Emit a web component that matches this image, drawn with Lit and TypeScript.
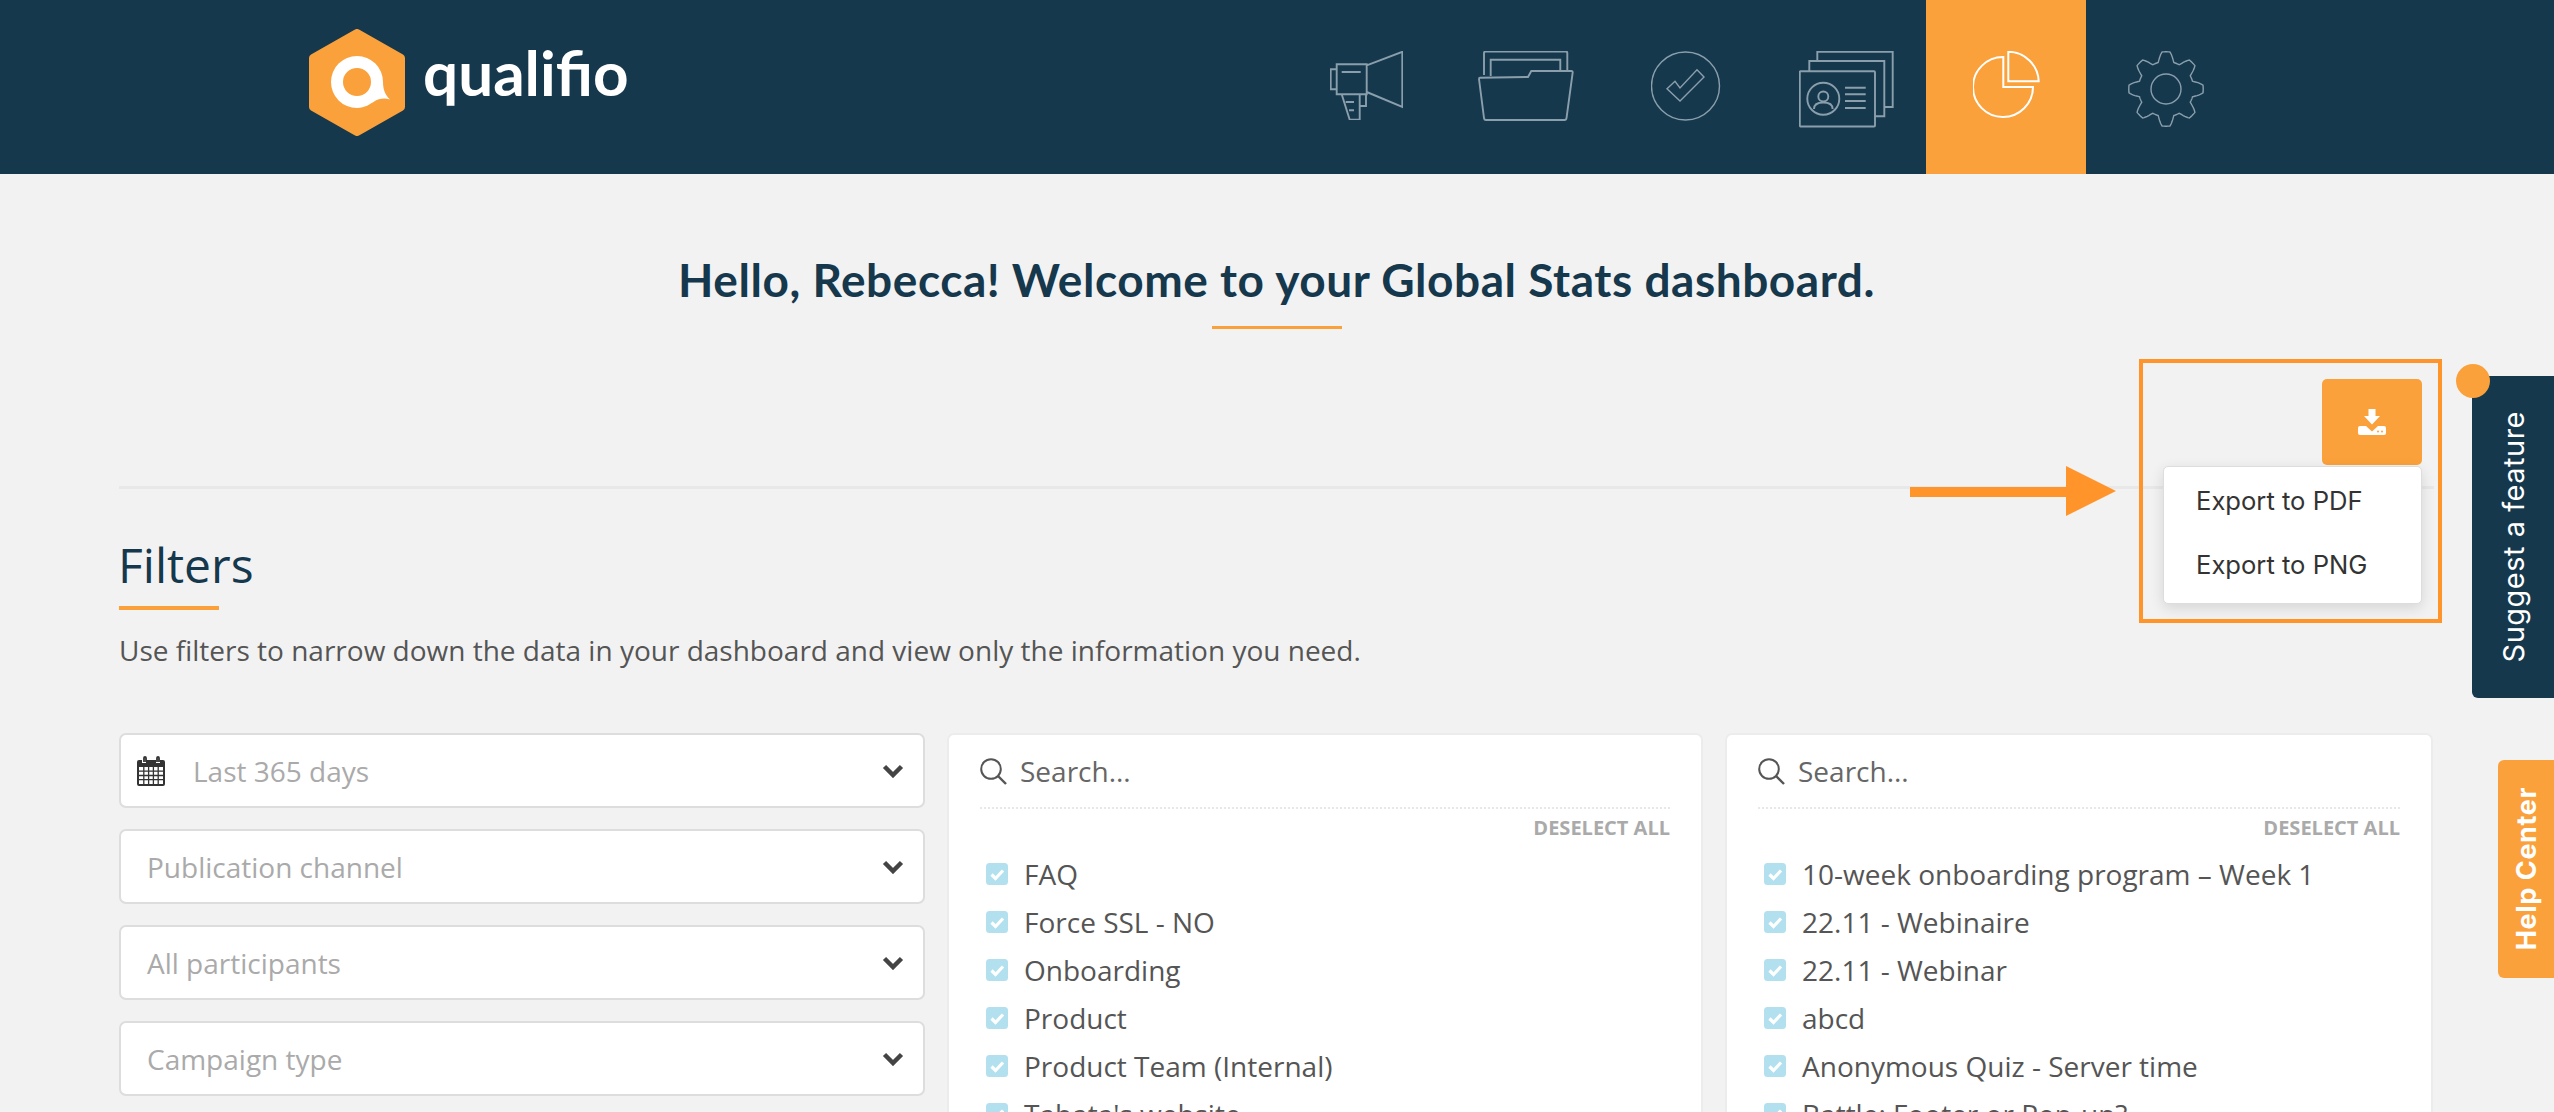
import { LitElement, html, css, svg } from "lit";
import { customElement } from "lit/decorators.js";

const gearPath = (() => {
  const pts: string[] = [];
  const n = 240;
  for (let i = 0; i < n; i++) {
    const t = (i / n) * Math.PI * 2;
    const c = Math.max(-1, Math.min(1, 1.5 * Math.cos(8 * t)));
    const r = 32.4 + 4.8 * c;
    pts.push(`${(38 + r * Math.sin(t)).toFixed(2)},${(38 - r * Math.cos(t)).toFixed(2)}`);
  }
  return "M" + pts.join("L") + "Z";
})();

const megaphone = svg`<svg class="ico" width="73" height="69" viewBox="0 0 73 69"><path d="M36.7 14.3 72.3.8V56L36.7 41M6.7 13.3h30v30h-30zM6.7 18.3h-6v20h6M11.7 21h19M11.7 43.3l8 25.4h10V43.3M15.7 51H24M19 59.3h5M29.7 55H36V43.3"/></svg>`;
const folder = svg`<svg class="ico" width="96" height="70" viewBox="0 0 96 70"><path d="M6 24V2q0-1.500 1.500-1.500h80.300q1.500 0 1.500 1.500v17M12.700 25V8.700h69.600v10.600M2 26.700 50 26l3.300-6h40q1.500 0 1.400 1.500L88.500 67q-.2 2-2 2H8q-1.800 0-2-2L1 28q0-1.300 1-1.300Z"/></svg>`;
const check = svg`<svg class="ico thin" width="70" height="70" viewBox="0 0 70 70"><circle cx="34.500" cy="35" r="34"/><path d="M16 37.700 24 30.300 29 37 46 18.700 53 26 29 50Z"/></svg>`;
const cards = svg`<svg class="ico" width="95" height="77" viewBox="0 0 95 77"><rect x=".8" y="20.300" width="75.200" height="55.200" rx="1"/><path d="M10.300 20V10h75v55.300H76M18.300 9.500V.8h75.400V56h-8.400"/><circle cx="24.300" cy="47.700" r="16"/><circle cx="24.300" cy="45.500" r="5"/><path d="M15 58c0-5 4-6.500 9.300-6.500s9.300 1.500 9.300 6.500M46 36.700h20.700M46 43.300h20.700M46 50h20.700M46 57h20.700"/></svg>`;
const pie = svg`<svg class="ico active" width="67" height="67" viewBox="0 0 67 67"><path d="M30.300 6V36H60A30 30 0 1 1 30.300 6ZM35.300.8V30.300H65.700A30.500 30.500 0 0 0 35.300.8Z"/></svg>`;
const gear = svg`<svg class="ico thin" width="76" height="76" viewBox="0 0 76 76"><path d=${gearPath}/><circle cx="38" cy="38" r="15"/></svg>`;
const tabs = [megaphone, folder, check, cards, pie, gear];

const calendar = svg`<svg class="cal" width="28" height="30" viewBox="0 0 28 30"><path fill="#333" d="M2 4h3v3h4V4h10v3h4V4h3q2 0 2 2v22q0 2-2 2H2q-2 0-2-2V6q0-2 2-2Z"/><rect x="2" y="11" width="24" height="17" fill="#fff"/><path fill="none" stroke="#333" stroke-width="1.300" d="M2 15.200h24M2 19.500h24M2 23.700h24M6.800 11v17M11.600 11v17M16.400 11v17M21.200 11v17"/><path fill="none" stroke="#333" stroke-width="1.800" d="M7 6V2q0-1 1-1t1 1v4M20 6V2q0-1 1-1t1 1v4"/></svg>`;
const chevron = svg`<svg class="chev" width="22" height="14" viewBox="0 0 22 14"><path d="M2.500 2.500 11 11l8.500-8.500" fill="none" stroke="#444" stroke-width="4.500"/></svg>`;
const search = svg`<svg class="search" width="27" height="27" viewBox="0 0 27 27"><circle cx="11" cy="11" r="9.800" fill="none" stroke="#555" stroke-width="2"/><path d="M18 18l8 8" stroke="#555" stroke-width="2.400"/></svg>`;
const tick = svg`<svg class="tick" width="22" height="22" viewBox="0 0 22 22"><rect width="22" height="22" rx="3.500" fill="#b3e0ee"/><path d="M5.500 11.500 9.500 15.500 17 7.500" fill="none" stroke="#fff" stroke-width="3.200"/></svg>`;
const download = svg`<svg width="28" height="26" viewBox="0 0 28 26"><path fill="#fff" d="M10.500 0h7v7h4.500L14 15.500 6 7h4.500Z"/><path fill="#fff" d="M0 19q0-2 2-2h6l6 5.500 6-5.500h6q2 0 2 2v5q0 2-2 2H2q-2 0-2-2Z"/><circle cx="20" cy="22.500" r="1" fill="#fba13b"/><circle cx="24" cy="22.500" r="1" fill="#fba13b"/></svg>`;

const selects = ["Publication channel", "All participants", "Campaign type"];
const col2 = ["FAQ", "Force SSL - NO", "Onboarding", "Product", "Product Team (Internal)", "Tabata's website"];
const col3 = ["10-week onboarding program – Week 1", "22.11 - Webinaire", "22.11 - Webinar", "abcd", "Anonymous Quiz - Server time", "Battle: Footer or Pop-up?"];

@customElement("app-root")
export class AppRoot extends LitElement {
  static styles = css`
    :host { display: block; position: relative; width: 2554px; height: 1112px; overflow: hidden; background: #f2f2f2; font-family: "Open Sans", sans-serif; color: #555; }
    header { height: 174px; background: #16384d; display: flex; align-items: stretch; justify-content: space-between; padding: 0 308px 0 309px; }
    .logo { display: flex; align-items: flex-start; gap: 18px; padding-top: 29px; }
    .word { font-family: "Lato", sans-serif; font-weight: 700; font-size: 62px; line-height: 1; color: #fff; margin-top: 12px; }
    nav { display: flex; }
    .tab { width: 160px; display: flex; justify-content: center; padding-top: 51px; box-sizing: border-box; }
    .tab.on { background: #fba13b; }
    .ico { display: block; fill: none; stroke: #8a9fab; stroke-width: 1.900; }
    .ico.thin { stroke-width: 1.400; }
    .ico.active { stroke: #fff; stroke-width: 2; }
    main { padding: 0 120px 0 119px; }
    h1 { margin: 0; padding-top: 80px; text-align: center; font-family: "Lato", sans-serif; font-weight: 700; font-size: 46px; letter-spacing: .55px; line-height: 52px; color: #16384d; }
    .rule { width: 130px; height: 3px; background: #fba13b; margin: 20px auto 0; }
    .tools { position: relative; display: flex; justify-content: flex-end; padding-right: 12px; margin-top: 50px; }
    .dl { width: 100px; height: 86px; border-radius: 5px; background: #fba13b; display: flex; align-items: center; justify-content: center; }
    .menu { position: absolute; top: 87px; right: 12px; width: 259px; height: 138px; box-sizing: border-box; background: #fff; border: 1px solid #ddd; border-radius: 5px; box-shadow: 0 4px 14px rgba(0,0,0,.12); padding-top: 2px; z-index: 3; }
    .menu div { height: 64px; line-height: 64px; padding-left: 32px; font-family: "Inter", sans-serif; font-size: 25.600px; color: #333; }
    .divider { height: 3px; background: #e8e8e8; margin-top: 21px; }
    h2 { margin: 43px 0 0 -1px; font-weight: 400; font-size: 48px; line-height: 66px; color: #16384d; }
    .h2rule { width: 100px; height: 4px; background: #fba13b; margin-top: 8px; }
    .desc { margin: 22px 0 0; font-size: 28px; line-height: 36px; color: #555; }
    .grid { display: grid; grid-template-columns: 806px 756px 708px; column-gap: 22px; margin-top: 65px; align-items: start; }
    .stack { display: flex; flex-direction: column; gap: 21px; }
    .sel { height: 75px; box-sizing: border-box; border: 2px solid #ddd; border-radius: 7px; background: #fff; display: flex; align-items: center; padding: 0 19px 0 26px; font-size: 28px; color: #aaa; }
    .sel.date { padding-left: 16px; gap: 28px; }
    .sel span { flex: 1; }
    .chev { display: block; }
    .panel { height: 500px; box-sizing: border-box; background: #fff; border: 2px solid #ececec; border-radius: 7px; padding: 0 31px; }
    .sbar { height: 72px; display: flex; align-items: center; gap: 13px; border-bottom: 2px dotted #e8e8e8; font-size: 28px; color: #666; }
    .desel { text-align: right; font-weight: 700; font-size: 20px; line-height: 26px; color: #aaa; margin-top: 6px; }
    ul { list-style: none; margin: 9px 0 0; padding: 0; }
    li { height: 48px; display: flex; align-items: center; gap: 16px; padding-left: 6px; font-size: 28px; color: #555; }
    .tick { display: block; flex: none; }
    .annot { position: absolute; left: 2139px; top: 359px; width: 303px; height: 264px; box-sizing: border-box; border: 4px solid #ff952a; pointer-events: none; }
    .arrow { position: absolute; left: 1910px; top: 466px; }
    .side { position: absolute; right: 0; box-sizing: border-box; display: flex; align-items: center; justify-content: center; border-radius: 6px 0 0 6px; color: #fff; font-family: "Inter", sans-serif; }
    .side span { writing-mode: vertical-rl; transform: rotate(180deg); white-space: nowrap; }
    .suggest { top: 376px; width: 82px; height: 322px; background: #16384d; font-size: 29px; letter-spacing: .5px; }
    .help { top: 760px; width: 56px; height: 218px; background: #fba13b; font-size: 27px; letter-spacing: .6px; font-weight: 700; }
    .dot { position: absolute; left: 2456px; top: 364px; width: 34px; height: 34px; border-radius: 50%; background: #fba13b; }
  `;

  render() {
    const list = (items: string[]) => html`
      <div class="panel">
        <div class="sbar">${search}<span>Search...</span></div>
        <div class="desel">DESELECT ALL</div>
        <ul>${items.map((t) => html`<li>${tick}<span>${t}</span></li>`)}</ul>
      </div>`;
    return html`
      <header>
        <div class="logo">
          <svg width="96" height="107" viewBox="0 0 96 107">
            <path fill="#fba13b" stroke="#fba13b" stroke-width="8" stroke-linejoin="round" d="M48 4 92 29V78L48 103 4 78V29Z"/>
            <path fill="#fff" fill-rule="evenodd" d="M48 27A26 26 0 0 1 74 53C74 60 76 66 81 70.500 75 68.500 69 70 66 72 61 75 56 79 48 79A26 26 0 1 1 48 27ZM48 39A14 14 0 1 0 48 67 14 14 0 1 0 48 39Z"/>
          </svg>
          <div class="word">qualifio</div>
        </div>
        <nav>${tabs.map((t, i) => html`<div class="tab ${i === 4 ? "on" : ""}">${t}</div>`)}</nav>
      </header>
      <main>
        <h1>Hello, Rebecca! Welcome to your Global Stats dashboard.</h1>
        <div class="rule"></div>
        <div class="tools">
          <div class="dl">${download}</div>
          <div class="menu"><div>Export to PDF</div><div>Export to PNG</div></div>
        </div>
        <div class="divider"></div>
        <h2>Filters</h2>
        <div class="h2rule"></div>
        <p class="desc">Use filters to narrow down the data in your dashboard and view only the information you need.</p>
        <div class="grid">
          <div class="stack">
            <div class="sel date">${calendar}<span>Last 365 days</span>${chevron}</div>
            ${selects.map((s) => html`<div class="sel"><span>${s}</span>${chevron}</div>`)}
          </div>
          ${list(col2)}
          ${list(col3)}
        </div>
      </main>
      <div class="annot"></div>
      <svg class="arrow" width="206" height="50" viewBox="0 0 206 50"><path fill="#ff952a" d="M0 21H156V0L206 25 156 50V31H0Z"/></svg>
      <div class="side suggest"><span>Suggest a feature</span></div>
      <div class="dot"></div>
      <div class="side help"><span>Help Center</span></div>
    `;
  }
}
